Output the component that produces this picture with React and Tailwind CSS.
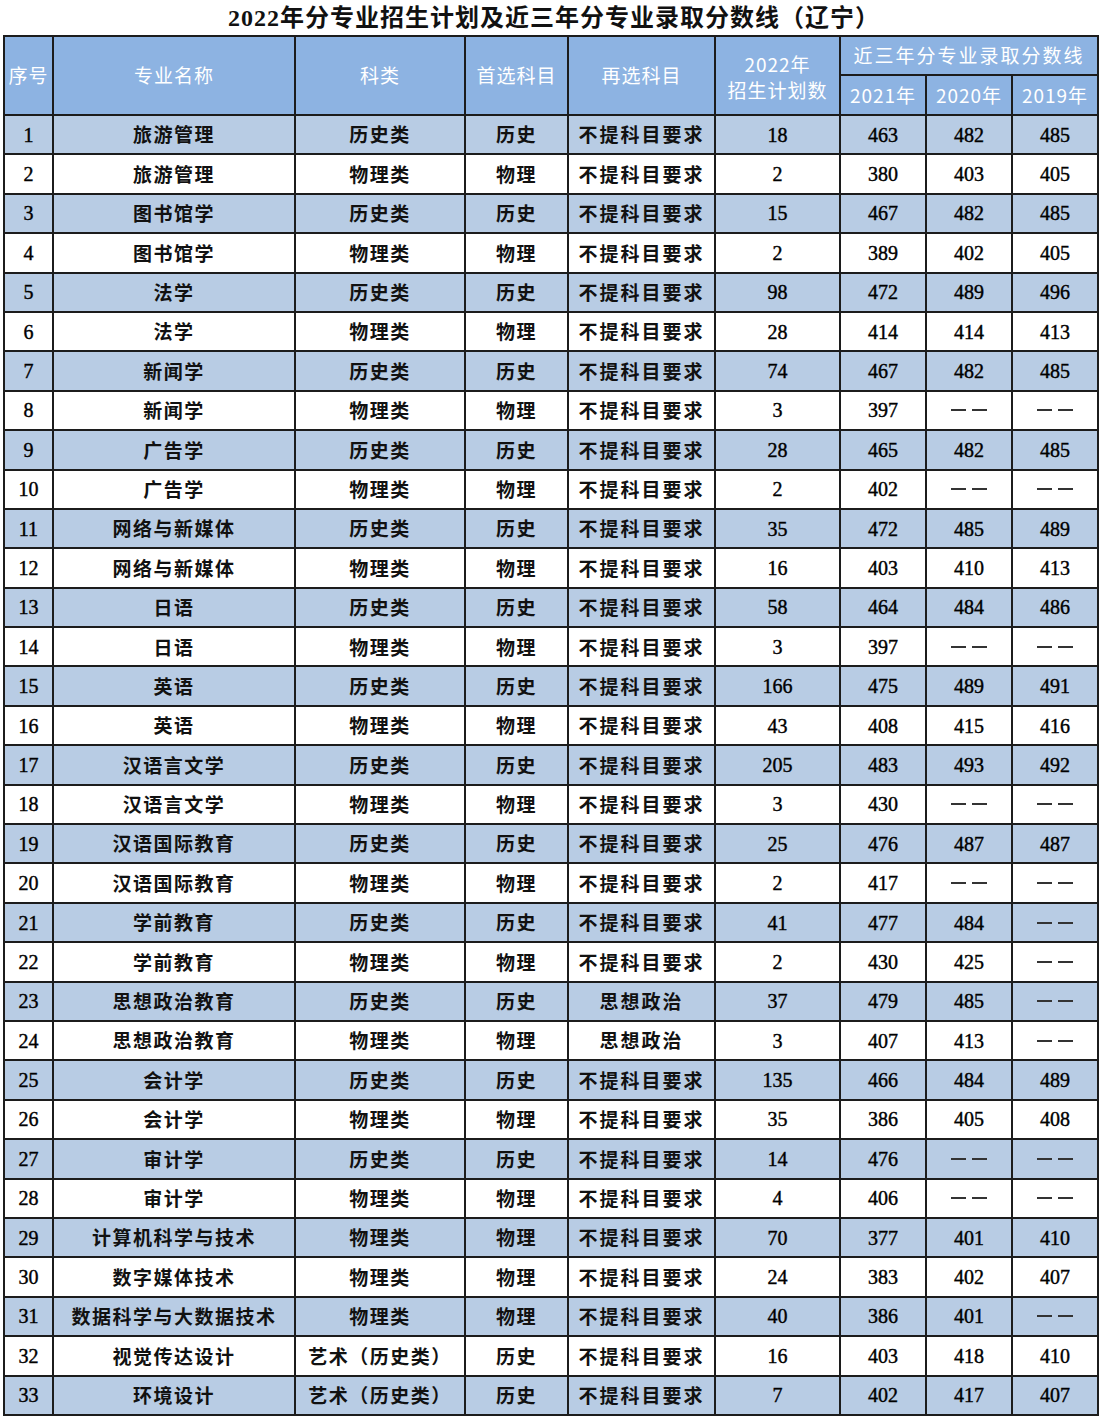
import React from "react";

const ROWS = [
  [1, "旅游管理", "历史类", "历史", "不提科目要求", "18", "463", "482", "485"],
  [2, "旅游管理", "物理类", "物理", "不提科目要求", "2", "380", "403", "405"],
  [3, "图书馆学", "历史类", "历史", "不提科目要求", "15", "467", "482", "485"],
  [4, "图书馆学", "物理类", "物理", "不提科目要求", "2", "389", "402", "405"],
  [5, "法学", "历史类", "历史", "不提科目要求", "98", "472", "489", "496"],
  [6, "法学", "物理类", "物理", "不提科目要求", "28", "414", "414", "413"],
  [7, "新闻学", "历史类", "历史", "不提科目要求", "74", "467", "482", "485"],
  [8, "新闻学", "物理类", "物理", "不提科目要求", "3", "397", "-", "-"],
  [9, "广告学", "历史类", "历史", "不提科目要求", "28", "465", "482", "485"],
  [10, "广告学", "物理类", "物理", "不提科目要求", "2", "402", "-", "-"],
  [11, "网络与新媒体", "历史类", "历史", "不提科目要求", "35", "472", "485", "489"],
  [12, "网络与新媒体", "物理类", "物理", "不提科目要求", "16", "403", "410", "413"],
  [13, "日语", "历史类", "历史", "不提科目要求", "58", "464", "484", "486"],
  [14, "日语", "物理类", "物理", "不提科目要求", "3", "397", "-", "-"],
  [15, "英语", "历史类", "历史", "不提科目要求", "166", "475", "489", "491"],
  [16, "英语", "物理类", "物理", "不提科目要求", "43", "408", "415", "416"],
  [17, "汉语言文学", "历史类", "历史", "不提科目要求", "205", "483", "493", "492"],
  [18, "汉语言文学", "物理类", "物理", "不提科目要求", "3", "430", "-", "-"],
  [19, "汉语国际教育", "历史类", "历史", "不提科目要求", "25", "476", "487", "487"],
  [20, "汉语国际教育", "物理类", "物理", "不提科目要求", "2", "417", "-", "-"],
  [21, "学前教育", "历史类", "历史", "不提科目要求", "41", "477", "484", "-"],
  [22, "学前教育", "物理类", "物理", "不提科目要求", "2", "430", "425", "-"],
  [23, "思想政治教育", "历史类", "历史", "思想政治", "37", "479", "485", "-"],
  [24, "思想政治教育", "物理类", "物理", "思想政治", "3", "407", "413", "-"],
  [25, "会计学", "历史类", "历史", "不提科目要求", "135", "466", "484", "489"],
  [26, "会计学", "物理类", "物理", "不提科目要求", "35", "386", "405", "408"],
  [27, "审计学", "历史类", "历史", "不提科目要求", "14", "476", "-", "-"],
  [28, "审计学", "物理类", "物理", "不提科目要求", "4", "406", "-", "-"],
  [29, "计算机科学与技术", "物理类", "物理", "不提科目要求", "70", "377", "401", "410"],
  [30, "数字媒体技术", "物理类", "物理", "不提科目要求", "24", "383", "402", "407"],
  [31, "数据科学与大数据技术", "物理类", "物理", "不提科目要求", "40", "386", "401", "-"],
  [32, "视觉传达设计", "艺术（历史类）", "历史", "不提科目要求", "16", "403", "418", "410"],
  [33, "环境设计", "艺术（历史类）", "历史", "不提科目要求", "7", "402", "417", "407"],
];

const FONT = { fontFamily: '"Liberation Serif", "Noto Sans CJK SC", serif' };
const CJK = { fontFamily: '"Noto Sans CJK SC", sans-serif' };

// 两条短横表示无数据
const Score = ({ v }) =>
  v === "-" ? (
    <div className="flex justify-center items-center gap-[6px]">
      <span className="block w-[15px] h-[2px] bg-[#333]" />
      <span className="block w-[15px] h-[2px] bg-[#333]" />
    </div>
  ) : (
    v
  );

export default function App() {
  const cell = "border-2 border-[#1c1c1c] text-center p-0";
  const head = `${cell} text-white font-normal text-[19px] tracking-[1px]`;
  const txt = `${cell} text-[19px] font-bold tracking-[1.5px]`;
  const num = `${cell} text-[20px] text-black [-webkit-text-stroke:0.4px_#000]`;
  return (
    <div className="w-[1100px] h-[1422px] bg-white overflow-hidden" style={FONT}>
      <div className="h-[35px] flex items-center justify-center">
        <h1 className="text-[24px] font-bold text-[#111] tracking-[1px] ml-[8px]" style={FONT}>
          2022年分专业招生计划及近三年分专业录取分数线（辽宁）
        </h1>
      </div>
      <table className="ml-[3px] w-[1094px] table-fixed border-collapse text-[#111]">
        <colgroup>
          <col className="w-[49px]" />
          <col className="w-[242px]" />
          <col className="w-[170px]" />
          <col className="w-[103px]" />
          <col className="w-[147px]" />
          <col className="w-[125px]" />
          <col className="w-[86px]" />
          <col className="w-[86px]" />
          <col className="w-[86px]" />
        </colgroup>
        <thead className="bg-[#8db3e2]" style={CJK}>
          <tr className="h-[39px]">
            <th rowSpan={2} className={head}>序号</th>
            <th rowSpan={2} className={head}>专业名称</th>
            <th rowSpan={2} className={head}>科类</th>
            <th rowSpan={2} className={head}>首选科目</th>
            <th rowSpan={2} className={head}>再选科目</th>
            <th rowSpan={2} className={`${head} leading-[26px] pt-[2px]`}>
              2022年
              <br />
              招生计划数
            </th>
            <th colSpan={3} className={`${head} tracking-[2px]`}>近三年分专业录取分数线</th>
          </tr>
          <tr className="h-[40px]">
            <th className={head}>2021年</th>
            <th className={head}>2020年</th>
            <th className={head}>2019年</th>
          </tr>
        </thead>
        <tbody>
          {ROWS.map((r) => (
            <tr key={r[0]} className={`h-[39.4px] ${r[0] % 2 ? "bg-[#b8cce4]" : "bg-white"}`}>
              <td className={num}>{r[0]}</td>
              <td className={txt} style={CJK}>{r[1]}</td>
              <td className={txt} style={CJK}>{r[2]}</td>
              <td className={txt} style={CJK}>{r[3]}</td>
              <td className={`${txt} tracking-[2px]`} style={CJK}>{r[4]}</td>
              <td className={num}>{r[5]}</td>
              <td className={num}><Score v={r[6]} /></td>
              <td className={num}><Score v={r[7]} /></td>
              <td className={num}><Score v={r[8]} /></td>
            </tr>
          ))}
        </tbody>
      </table>
    </div>
  );
}
